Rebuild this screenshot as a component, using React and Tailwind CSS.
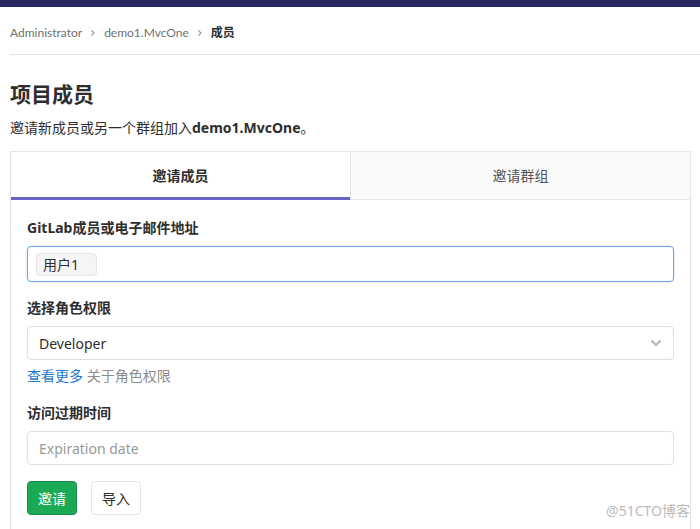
import React from "react";

const font = { fontFamily: '"Noto Sans", "Noto Sans CJK SC", sans-serif' };
const crumbFont = { fontFamily: 'Lato, "Noto Sans CJK SC", sans-serif', fontSize: "12px" };

function Chevron({ className }) {
  return (
    <svg className={className} width="8" height="8" viewBox="0 0 8 8" fill="none">
      <path d="M2.5 1.5L5 4L2.5 6.5" stroke="currentColor" strokeWidth="1.1" />
    </svg>
  );
}

export default function App() {
  return (
    <div className="w-[700px] h-[529px] bg-white overflow-hidden relative text-[#2e2e2e]" style={font}>
      <div className="h-[7px] bg-[#292961]" />
      <div className="pl-[10px]">
        <div className="h-[48px] pt-[4px] border-b border-[#e5e5e5] flex items-center gap-[7px] text-[12px] text-[#707070]">
          <span style={crumbFont}>Administrator</span>
          <Chevron className="text-[#999]" />
          <span style={crumbFont}>demo1.MvcOne</span>
          <Chevron className="text-[#999]" />
          <span className="font-bold text-[#2e2e2e]">成员</span>
        </div>
      </div>
      <div className="px-[10px]">
        <h1 className="mt-[24px] text-[21px] leading-[30px] font-bold text-[#2e2e2e]">项目成员</h1>
        <p className="mt-[9px] text-[14px] leading-[20px] text-[#2e2e2e]">
          邀请新成员或另一个群组加入<span className="font-bold">demo1.MvcOne</span>。
        </p>
        <div className="mt-[13px] w-[681px] border-l border-r border-t border-[#e5e5e5]">
          <div className="flex h-[48px]">
            <div className="flex-1 flex items-center justify-center text-[14px] font-bold border-b-[3px] border-[#6666c4] pt-[2px]">
              邀请成员
            </div>
            <div className="flex-1 flex items-center justify-center text-[14px] text-[#555] bg-[#fafafa] border-l border-b border-[#e5e5e5]">
              邀请群组
            </div>
          </div>
          <div className="px-[16px] pt-[18px] pb-[20px]">
            <div className="text-[14px] font-bold leading-[20px]">GitLab成员或电子邮件地址</div>
            <div className="mt-[8px] h-[36px] rounded-[4px] border border-[#73a5e6] shadow-[0_0_2px_rgba(31,120,209,0.35)] flex items-center px-[8px]">
              <span className="h-[23px] w-[61px] rounded-[4px] bg-[#f5f5f5] border border-[#e5e5e5] flex items-center pl-[6px] text-[14px] text-[#2e2e2e]">
                用户1
              </span>
            </div>
            <div className="mt-[16px] text-[14px] font-bold leading-[20px]">选择角色权限</div>
            <div className="mt-[8px] h-[34px] rounded-[4px] border border-[#dfdfdf] flex items-center justify-between px-[11px] text-[14px] text-[#2e2e2e]">
              <span>Developer</span>
              <svg width="12" height="8" viewBox="0 0 12 8" fill="none">
                <path d="M1.5 1.5L6 6L10.5 1.5" stroke="#b5b5b5" strokeWidth="2" />
              </svg>
            </div>
            <div className="mt-[6px] text-[14px] leading-[20px]">
              <span className="text-[#1f78d1]">查看更多</span>
              <span className="text-[#8c8c8c]"> 关于角色权限</span>
            </div>
            <div className="mt-[17px] text-[14px] font-bold leading-[20px]">访问过期时间</div>
            <div className="mt-[8px] h-[34px] rounded-[4px] border border-[#dfdfdf] flex items-center px-[11px] text-[14px] text-[#999]">
              Expiration date
            </div>
            <div className="mt-[16px] flex gap-[14px]">
              <button className="h-[34px] w-[50px] rounded-[4px] bg-[#1aaa55] border border-[#168f48] text-white text-[14px]">邀请</button>
              <button className="h-[34px] w-[50px] rounded-[4px] bg-white border border-[#e5e5e5] text-[#2e2e2e] text-[14px]">导入</button>
            </div>
          </div>
        </div>
      </div>
      <div className="absolute right-[10px] bottom-[8px] text-[14px] text-[#bbb]">@51CTO博客</div>
    </div>
  );
}
